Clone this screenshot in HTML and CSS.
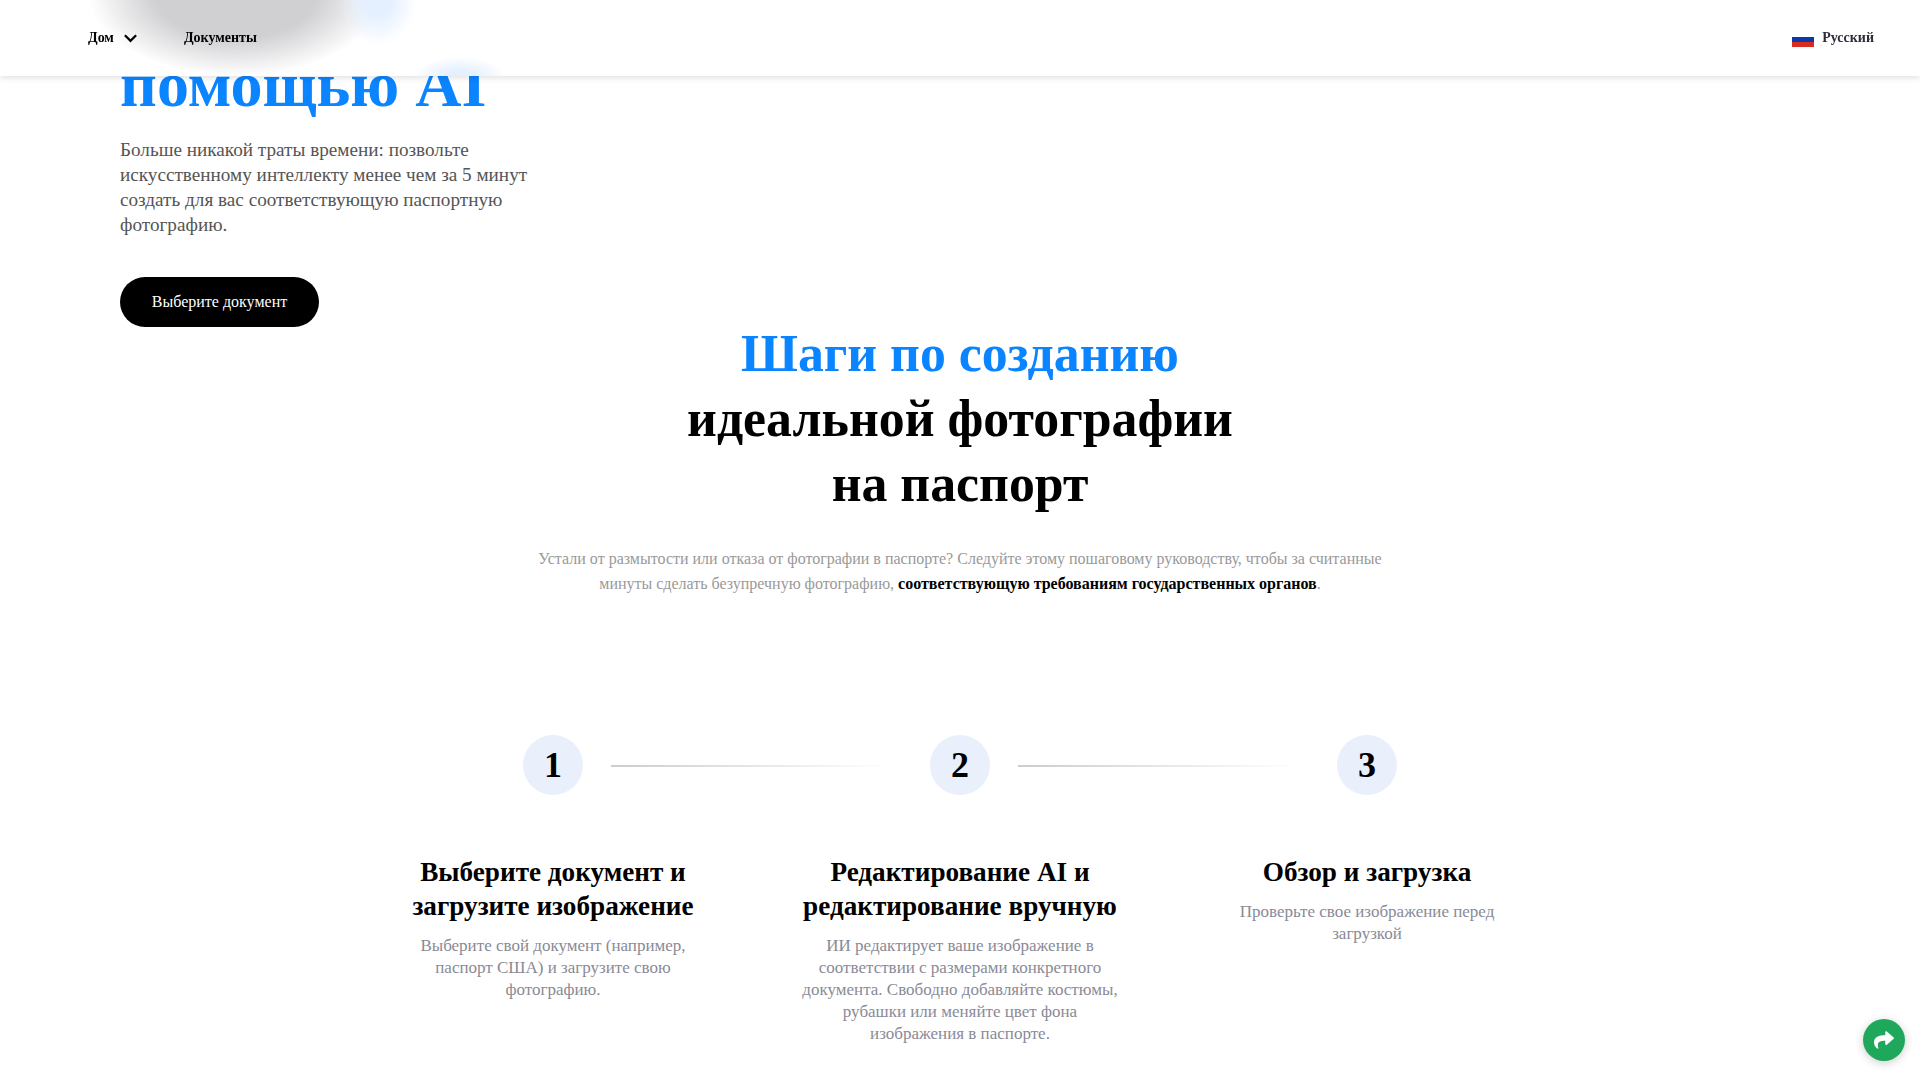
FILE: index.html
```html
<!DOCTYPE html>
<html lang="ru">
<head>
  <meta charset="UTF-8">
  <title>Фото на паспорт с помощью AI</title>
  <link rel="stylesheet" href="styles.css">
</head>
<body>
  <header class="topbar">
    <div class="topbar-glow">
      <div class="glow glow-dark"></div>
      <div class="glow glow-blue"></div>
      <div class="glow glow-ai"></div>
    </div>
    <nav class="nav">
      <a class="nav-link" href="#">Дом
        <svg class="chevron" viewBox="0 0 16 10" width="15" height="10"><path d="M2 2l6 6 6-6" fill="none" stroke="#000" stroke-width="2.4"/></svg>
      </a>
      <a class="nav-link" href="#">Документы</a>
    </nav>
    <div class="lang">
      <svg class="flag" viewBox="0 0 22 15" width="22" height="15"><rect width="22" height="5" fill="#fff"/><rect y="5" width="22" height="5" fill="#0a3aa8"/><rect y="10" width="22" height="5" fill="#d92b20"/></svg>
      <span>Русский</span>
    </div>
  </header>

  <main class="page">
    <section class="hero">
      <h1 class="hero-title blue">помощью AI</h1>
      <p class="hero-text">Больше никакой траты времени: позвольте искусственному интеллекту менее чем за 5 минут создать для вас соответствующую паспортную фотографию.</p>
      <a class="cta" href="#">Выберите документ</a>
    </section>

    <section class="steps">
      <h2 class="steps-title"><span class="blue">Шаги по созданию</span><br>идеальной фотографии<br>на паспорт</h2>
      <p class="steps-text">Устали от размытости или отказа от фотографии в паспорте? Следуйте этому пошаговому руководству, чтобы за считанные минуты сделать безупречную фотографию, <b>соответствующую требованиям государственных органов</b>.</p>

      <div class="step-grid">
        <div class="step">
          <div class="step-num">1</div>
          <div class="step-line"></div>
          <h3>Выберите документ и загрузите изображение</h3>
          <p>Выберите свой документ (например, паспорт США) и загрузите свою фотографию.</p>
        </div>
        <div class="step">
          <div class="step-num">2</div>
          <div class="step-line"></div>
          <h3>Редактирование AI и редактирование вручную</h3>
          <p>ИИ редактирует ваше изображение в соответствии с размерами конкретного документа. Свободно добавляйте костюмы, рубашки или меняйте цвет фона изображения в паспорте.</p>
        </div>
        <div class="step">
          <div class="step-num">3</div>
          <h3>Обзор и загрузка</h3>
          <p>Проверьте свое изображение перед загрузкой</p>
        </div>
      </div>
    </section>
  </main>

  <a class="share" href="#">
    <svg viewBox="0 0 512 512" width="20" height="20"><path fill="#fff" d="M503.7 189.8L327.7 37.9C312.3 24.6 288 35.4 288 56v80.1C127.4 137.9 0 170.1 0 322.3c0 61.4 39.6 122.3 83.3 154.1 13.6 9.9 33-2.5 28-18.6C66 312.8 132.9 274.3 288 272.1V360c0 20.7 24.3 31.4 39.7 18.2l176-152c11.1-9.6 11.1-26.8 0-36.4z"/></svg>
  </a>
</body>
</html>
```

FILE: styles.css
```css
html, body {
  margin: 0;
  height: 100%;
  overflow: hidden;
  background: #fff;
}
body {
  font-family: "Liberation Serif", "Times New Roman", serif;
  color: #000;
}
a {
  color: inherit;
  text-decoration: none;
}
.blue {
  color: #0a84ff;
}

.topbar {
  position: fixed;
  top: 0;
  left: 0;
  right: 0;
  z-index: 10;
  height: 76px;
  display: flex;
  align-items: center;
  justify-content: space-between;
  padding: 0 46px 0 88px;
  background: #fff;
  box-shadow: 0 2px 6px rgba(0, 0, 0, 0.12);
}
/* smudges of the hero heading showing through the frosted header */
.topbar-glow {
  position: absolute;
  inset: 0;
  overflow: hidden;
}
.glow {
  position: absolute;
}
.glow-dark {
  left: 88px;
  top: -90px;
  width: 296px;
  height: 166px;
  background: radial-gradient(closest-side, #d0d0d3 55%, rgba(208, 208, 211, 0) 100%);
}
.glow-blue {
  left: 340px;
  top: -45px;
  width: 76px;
  height: 90px;
  background: radial-gradient(closest-side, #e4f0ff 35%, rgba(228, 240, 255, 0) 100%);
}
.glow-ai {
  left: 412px;
  top: 56px;
  width: 96px;
  height: 48px;
  background: radial-gradient(closest-side, #e4f0ff 35%, rgba(228, 240, 255, 0) 100%);
}
.nav {
  position: relative;
  display: flex;
  gap: 46px;
}
.nav-link {
  display: flex;
  align-items: center;
  gap: 9px;
  font-size: 14px;
  font-weight: 700;
}
.lang {
  position: relative;
  display: flex;
  align-items: center;
  gap: 8px;
  font-size: 14px;
  font-weight: 700;
  color: #2d2d3a;
}
.flag {
  margin-top: 2px;
}

.page {
  margin-top: 49px;
}
.hero {
  padding-left: 120px;
}
.hero-title {
  margin: 0;
  font-size: 64px;
  line-height: 72px;
  font-weight: 700;
}
.hero-text {
  width: 420px;
  margin: 16px 0 0;
  font-size: 19.2px;
  line-height: 25px;
  color: #555;
}
.cta {
  display: inline-block;
  margin-top: 40px;
  width: 199px;
  height: 50px;
  line-height: 50px;
  text-align: center;
  border-radius: 25px;
  background: #000;
  color: #fff;
  font-size: 16px;
}

.steps {
  margin-top: -6px;
  text-align: center;
}
.steps-title {
  margin: 0;
  font-size: 51.8px;
  line-height: 65px;
  font-weight: 700;
}
.steps-text {
  width: 860px;
  margin: 31px auto 0;
  font-size: 16px;
  line-height: 24.5px;
  color: #999;
}
.steps-text b {
  color: #000;
}
.step-grid {
  display: flex;
  justify-content: center;
  gap: 87px;
  margin-top: 139px;
}
.step {
  position: relative;
  width: 320px;
}
.step-num {
  width: 60px;
  height: 60px;
  margin: 0 auto;
  border-radius: 50%;
  background: #e9f0fc;
  font-size: 36px;
  font-weight: 700;
  line-height: 60px;
}
.step-line {
  position: absolute;
  top: 30px;
  left: 218px;
  width: 280px;
  height: 2px;
  background: linear-gradient(to right, #ccc, #fff);
}
.step h3 {
  margin: 60px 0 0;
  font-size: 27.2px;
  line-height: 34px;
  font-weight: 700;
}
.step p {
  margin: 12px 0 0;
  font-size: 17px;
  line-height: 22px;
  color: #8a8a96;
}

.share {
  position: fixed;
  right: 15px;
  bottom: 19px;
  width: 42px;
  height: 42px;
  border-radius: 50%;
  background: #1fa85c;
  display: flex;
  align-items: center;
  justify-content: center;
  box-shadow: 0 2px 10px rgba(0, 0, 0, 0.2);
}
```
